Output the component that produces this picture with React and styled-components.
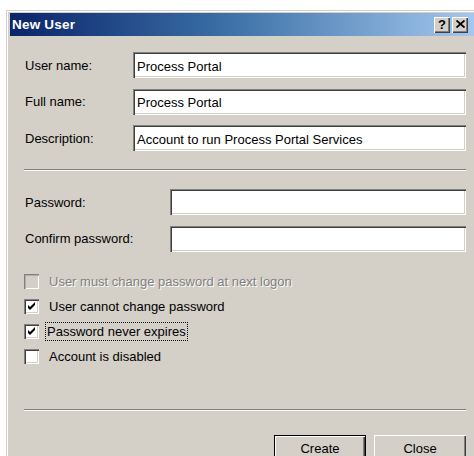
import React from "react";
import styled, { createGlobalStyle } from "styled-components";

const Global = createGlobalStyle`
  html, body {
    margin: 0;
    padding: 0;
    background: #ffffff;
    overflow: hidden;
    width: 474px;
    height: 456px;
  }
  body {
    font-family: "Liberation Sans", Arial, sans-serif;
  }
`;

const Desk = styled.div`
  padding: 10px 0 0 6px;
  width: 474px;
  height: 456px;
  box-sizing: border-box;
  overflow: hidden;
`;

const Window = styled.div`
  width: 478px;
  height: 470px;
  box-sizing: border-box;
  background: #d4d0c8;
  padding: 3px 4px 4px 4px;
  box-shadow: inset 1px 1px 0 #d4d0c8, inset 2px 2px 0 #ffffff,
    inset -1px -1px 0 #404040, inset -2px -2px 0 #808080;
  display: flex;
  flex-direction: column;
`;

const TitleBar = styled.div`
  height: 23px;
  display: flex;
  align-items: center;
  padding: 0 12px 0 2px;
  background: linear-gradient(to right, #0a246a 0%, #3a6ea5 45%, #a6caf0 100%);
`;

const Title = styled.div`
  flex: 1;
  color: #ffffff;
  font-weight: bold;
  font-size: 13.5px;
  letter-spacing: 0.2px;
`;

const CaptionButton = styled.div`
  width: 16px;
  height: 16px;
  margin-left: ${(p) => (p.$gap ? "2px" : "0")};
  box-sizing: border-box;
  background: #d4d0c8;
  box-shadow: inset 1px 1px 0 #ffffff, inset -1px -1px 0 #404040,
    inset -2px -2px 0 #808080;
  display: flex;
  align-items: center;
  justify-content: center;
  font-weight: bold;
  font-size: 13px;
  color: #000;
  line-height: 1;
  padding-bottom: 1px;
`;

const Body = styled.div`
  padding: 16px 14px 0 14px;
  width: 470px;
  box-sizing: border-box;
  display: flex;
  flex-direction: column;
`;

const FieldGrid = styled.div`
  display: grid;
  grid-template-columns: ${(p) => p.$label}px 1fr;
  row-gap: 10.5px;
  align-items: center;
  width: 442px;
`;

const Label = styled.div`
  font-size: 13px;
  color: #000;
  padding-left: 1px;
`;

const TextBox = styled.div`
  height: 26px;
  box-sizing: border-box;
  background: #ffffff;
  padding: 2px 4px 0 4px;
  box-shadow: inset 1px 1px 0 #808080, inset 2px 2px 0 #404040,
    inset -1px -1px 0 #ffffff, inset -2px -2px 0 #d4d0c8;
  font-size: 13px;
  display: flex;
  align-items: center;
  color: #000;
`;

const Divider = styled.div`
  width: 442px;
  height: 2px;
  margin: ${(p) => p.$m};
  border-top: 1px solid #808080;
  border-bottom: 1px solid #ffffff;
  box-sizing: border-box;
`;

const Checks = styled.div`
  margin-top: 17px;
  display: flex;
  flex-direction: column;
`;

const CheckRow = styled.div`
  height: 25px;
  display: flex;
  align-items: center;
  gap: 9px;
`;

const Box = styled.div`
  width: 15px;
  height: 15px;
  box-sizing: border-box;
  background: ${(p) => (p.$disabled ? "#d4d0c8" : "#ffffff")};
  box-shadow: ${(p) =>
    p.$disabled
      ? "inset 1px 1px 0 #808080, inset 2px 2px 0 #b0ada6, inset -1px -1px 0 #ffffff, inset -2px -2px 0 #d4d0c8"
      : "inset 1px 1px 0 #808080, inset 2px 2px 0 #404040, inset -1px -1px 0 #ffffff, inset -2px -2px 0 #d4d0c8"};
  display: flex;
  align-items: center;
  justify-content: center;
`;

const CheckText = styled.span`
  font-size: 13px;
  color: ${(p) => (p.$disabled ? "#808080" : "#000")};
  text-shadow: ${(p) => (p.$disabled ? "1px 1px 0 #ffffff" : "none")};
  padding: 1px 1px;
  outline: ${(p) => (p.$focus ? "1px dotted #000" : "none")};
  margin-left: ${(p) => (p.$focus ? "-2px" : "0")};
`;

const Buttons = styled.div`
  width: 442px;
  display: flex;
  justify-content: flex-end;
  gap: 8px;
`;

const PushButton = styled.div`
  width: 92px;
  height: 27px;
  box-sizing: border-box;
  background: #d4d0c8;
  display: flex;
  align-items: center;
  justify-content: center;
  font-size: 13px;
  color: #000;
  padding-top: 1px;
  box-shadow: ${(p) =>
    p.$default
      ? "inset 0 0 0 1px #000000, inset 2px 2px 0 #ffffff, inset -2px -2px 0 #404040, inset -3px -3px 0 #808080"
      : "inset 1px 1px 0 #ffffff, inset -1px -1px 0 #404040, inset -2px -2px 0 #808080"};
`;

// classic three-pixel-thick check mark
const Tick = () => (
  <svg width="9" height="9" viewBox="0 0 9 9" style={{ marginTop: 1 }}>
    <path d="M1 3 L3 5 L8 0 L8 3 L3 8 L1 6 Z" fill="#000" />
  </svg>
);

const CloseGlyph = () => (
  <svg width="9" height="8" viewBox="0 0 9 8">
    <path d="M0.5 0.5 L8.5 7.5 M8.5 0.5 L0.5 7.5" stroke="#000" strokeWidth="1.8" />
  </svg>
);

const CheckItem = ({ checked, disabled, focus, children }) => (
  <CheckRow>
    <Box $disabled={disabled}>{checked && <Tick />}</Box>
    <CheckText $disabled={disabled} $focus={focus}>
      {children}
    </CheckText>
  </CheckRow>
);

export default function App() {
  return (
    <>
      <Global />
      <Desk>
        <Window>
          <TitleBar>
            <Title>New User</Title>
            <CaptionButton>?</CaptionButton>
            <CaptionButton $gap>
              <CloseGlyph />
            </CaptionButton>
          </TitleBar>
          <Body>
            <FieldGrid $label={109}>
              <Label>User name:</Label>
              <TextBox>Process Portal</TextBox>
              <Label>Full name:</Label>
              <TextBox>Process Portal</TextBox>
              <Label>Description:</Label>
              <TextBox>Account to run Process Portal Services</TextBox>
            </FieldGrid>
            <Divider $m="18px 0 18px 0" />
            <FieldGrid $label={146}>
              <Label>Password:</Label>
              <TextBox />
              <Label>Confirm password:</Label>
              <TextBox />
            </FieldGrid>
            <Checks>
              <CheckItem disabled>User must change password at next logon</CheckItem>
              <CheckItem checked>User cannot change password</CheckItem>
              <CheckItem checked focus>
                Password never expires
              </CheckItem>
              <CheckItem>Account is disabled</CheckItem>
            </Checks>
            <Divider $m="40px 0 24px 0" />
            <Buttons>
              <PushButton $default>Create</PushButton>
              <PushButton>Close</PushButton>
            </Buttons>
          </Body>
        </Window>
      </Desk>
    </>
  );
}
